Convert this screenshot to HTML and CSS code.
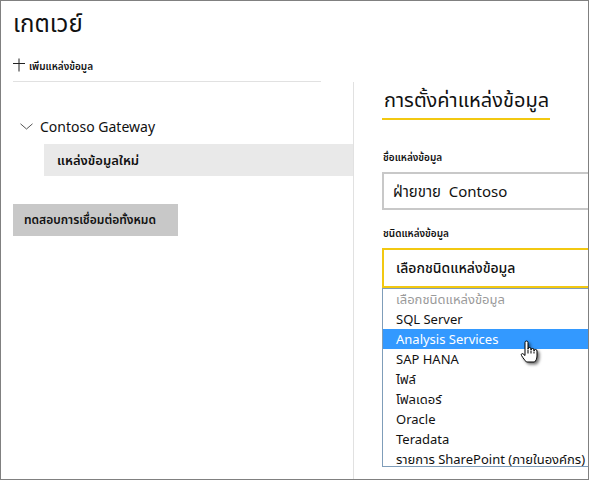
FILE: index.html
```html
<!DOCTYPE html>
<html lang="th">
<head>
<meta charset="utf-8">
<title>เกตเวย์</title>
<link rel="stylesheet" href="styles.css">
</head>
<body>
<div class="frame">
  <header class="header">
    <h1 class="title">เกตเวย์</h1>
    <div class="add">
      <svg class="plus" width="12" height="14" viewBox="0 0 12 14"><path d="M6 0.5V13.5M0 5.5H12" stroke="#222" stroke-width="1"/></svg>
      <span>เพิ่มแหล่งข้อมูล</span>
    </div>
  </header>
  <div class="main">
    <div class="left">
      <div class="rule"></div>
      <div class="tree-row">
        <svg class="chev" width="13" height="7" viewBox="0 0 13 7"><path d="M0.5 0.8L6.5 6L12.5 0.8" fill="none" stroke="#555" stroke-width="1"/></svg>
        <span>Contoso Gateway</span>
      </div>
      <div class="tree-item">แหล่งข้อมูลใหม่</div>
      <div class="btn">ทดสอบการเชื่อมต่อทั้งหมด</div>
    </div>
    <div class="right">
      <h2 class="heading">การตั้งค่าแหล่งข้อมูล</h2>
      <div class="label first">ชื่อแหล่งข้อมูล</div>
      <div class="input">ฝ่ายขาย&nbsp; Contoso</div>
      <div class="label">ชนิดแหล่งข้อมูล</div>
      <div class="select">เลือกชนิดแหล่งข้อมูล</div>
      <ul class="list">
        <li class="placeholder">เลือกชนิดแหล่งข้อมูล</li>
        <li>SQL Server</li>
        <li class="hl">Analysis Services</li>
        <li>SAP HANA</li>
        <li>ไฟล์</li>
        <li>โฟลเดอร์</li>
        <li>Oracle</li>
        <li>Teradata</li>
        <li>รายการ SharePoint (ภายในองค์กร)</li>
      </ul>
    </div>
  </div>
  <svg class="hand" width="20" height="24" viewBox="0 0 20 24">
    <path d="M6 2.5a1.5 1.5 0 0 1 3 0V9a1.5 1.5 0 0 1 3 0V10a1.5 1.5 0 0 1 3 0V11a1.5 1.5 0 0 1 3 0V16c0 3-1.2 4.8-2.5 6H7.5c-1.5-1.5-3.5-4-5-6.5c-.8-1.2.5-2.5 1.6-1.6L6 15.5Z" fill="#fff" stroke="#000" stroke-width="1" stroke-linejoin="round"/>
    <path d="M9 9.5V13.5M12 10.5V13.5M15 11.5V13.5" stroke="#000" stroke-width="1"/>
  </svg>
</div>
</body>
</html>
```
FILE: styles.css
```css
* { box-sizing: border-box; }
html, body { margin: 0; padding: 0; background: #fff; }
body {
  font-family: "Noto Sans", "Noto Sans Thai", "Leelawadee UI", Tahoma, sans-serif;
  color: #111;
}
.frame {
  width: 589px;
  height: 480px;
  border: 1px solid #808080;
  overflow: hidden;
  position: relative;
  display: flex;
  flex-direction: column;
}
.header { padding-left: 12px; }
.title {
  margin: 2px 0 0 0;
  font-size: 24px;
  font-weight: 400;
  line-height: 40px;
  height: 40px;
}
.add {
  margin-top: 14px;
  height: 20px;
  display: flex;
  align-items: center;
  gap: 4px;
  font-size: 10px;
  font-weight: 600;
}
.plus { display: block; margin-top: -4px; }
.main {
  margin-top: 4px;
  flex: 1;
  display: grid;
  grid-template-columns: 352px 1fr;
  min-height: 0;
}
.left { display: flex; flex-direction: column; }
.rule { height: 1px; background: #e1e1e1; margin: 0 32px 0 12px; }
.tree-row {
  margin-top: 34px;
  height: 20px;
  display: flex;
  align-items: center;
  gap: 7px;
  padding-left: 19px;
  font-size: 14px;
}
.chev { display: block; }
.tree-item {
  margin: 8px 0 0 43px;
  height: 32px;
  line-height: 32px;
  background: #e9e9e9;
  padding-left: 13px;
  font-size: 13px;
  font-weight: 600;
}
.btn {
  margin: 28px 0 0 12px;
  width: 165px;
  height: 32px;
  line-height: 32px;
  background: #c8c8c8;
  padding-left: 11px;
  font-size: 12px;
  font-weight: 600;
}
.right {
  border-left: 1px solid #e1e1e1;
  overflow: hidden;
  display: flex;
  flex-direction: column;
  margin-top: 1px;
}
.heading {
  margin: 5px 0 0 28px;
  width: 168px;
  padding: 0 0 5px 2px;
  border-bottom: 2px solid #f2c811;
  font-size: 20px;
  font-weight: 400;
  line-height: 26px;
}
.label {
  margin: 14px 0 0 29px;
  height: 18px;
  line-height: 18px;
  font-size: 10px;
  font-weight: 600;
}
.label.first { margin-top: 28px; }
.input {
  margin: 6px 0 0 28px;
  width: 260px;
  flex: none;
  height: 38px;
  line-height: 34px;
  border: 2px solid #c8c8c8;
  padding-left: 9px;
  font-size: 15px;
}
.select {
  margin: 6px 0 0 28px;
  width: 260px;
  flex: none;
  height: 40px;
  line-height: 36px;
  border: 2px solid #f2c811;
  padding-left: 12px;
  font-size: 14px;
  font-weight: 500;
}
.list {
  list-style: none;
  margin: 0 0 0 28px;
  padding: 0;
  width: 260px;
  height: 179px;
  flex: none;
  overflow: hidden;
  border: 1px solid #7f9db9;
}
.list li {
  height: 20px;
  line-height: 20px;
  padding-left: 13px;
  font-size: 13px;
  white-space: nowrap;
}
.list li.placeholder { color: #9a9a9a; }
.list li.hl { background: #3399ff; color: #fff; }
.hand {
  position: absolute;
  left: 518px;
  top: 339px;
  filter: drop-shadow(2px 2px 1.5px rgba(0,0,0,0.55));
}
```
